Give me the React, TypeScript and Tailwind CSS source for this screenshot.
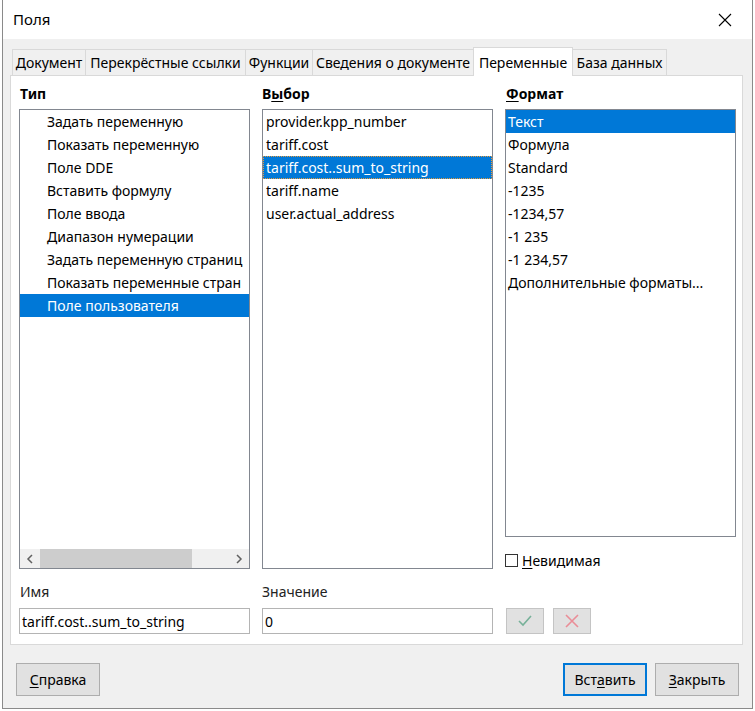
import React from "react";

const typeItems = [
  "Задать переменную",
  "Показать переменную",
  "Поле DDE",
  "Вставить формулу",
  "Поле ввода",
  "Диапазон нумерации",
  "Задать переменную страниц",
  "Показать переменные стран",
  "Поле пользователя",
];
const choiceItems = [
  "provider.kpp_number",
  "tariff.cost",
  "tariff.cost..sum_to_string",
  "tariff.name",
  "user.actual_address",
];
const formatItems = [
  "Текст",
  "Формула",
  "Standard",
  "-1235",
  "-1234,57",
  "-1 235",
  "-1 234,57",
  "Дополнительные форматы...",
];

export default function App() {
  return (
    <div
      className="w-[755px] h-[711px] bg-white relative overflow-hidden text-[14px] text-black"
      style={{ fontFamily: '"Noto Sans", "Open Sans", sans-serif' }}
    >
      <div className="absolute left-[2px] top-0 w-[751px] h-[709px] border border-[#8a8a8a] border-t-0 flex flex-col bg-[#f0f0f0]">
        {/* title bar */}
        <div className="h-[39px] bg-white flex items-center justify-between pl-[10px] pr-[19px] shrink-0">
          <span className="text-[15px]">Поля</span>
          <svg width="16" height="16" viewBox="0 0 16 16">
            <path d="M2 2 L14 14 M14 2 L2 14" stroke="#000" strokeWidth="1.1" />
          </svg>
        </div>
        {/* tabs */}
        <div className="pl-[7px] pt-[7px]">
          <div className="flex items-end pl-[2px] h-[29px] relative z-10">
            <div className="w-[73px] h-[26px] border-t border-l border-[#d9d9d9] flex items-center justify-center">Документ</div>
            <div className="w-[160px] h-[26px] border-t border-l border-[#d9d9d9] flex items-center justify-center">Перекрёстные ссылки</div>
            <div className="w-[67px] h-[26px] border-t border-l border-[#d9d9d9] flex items-center justify-center">Функции</div>
            <div className="w-[161px] h-[26px] border-t border-l border-[#d9d9d9] flex items-center justify-center">Сведения о документе</div>
            <div className="w-[100px] h-[29px] -mb-px bg-white border border-b-0 border-[#d9d9d9] flex items-center justify-center">Переменные</div>
            <div className="w-[94px] h-[26px] border-t border-r border-[#d9d9d9] flex items-center justify-center">База данных</div>
          </div>
          {/* panel */}
          <div className="w-[733px] bg-white border border-[#d9d9d9] h-[570px] pl-[8px] pt-[9px] flex flex-col">
            <div className="flex gap-[12px]">
              <div className="w-[231px] shrink-0 font-bold h-[18px] leading-[18px] pl-px">Тип</div>
              <div className="w-[231px] shrink-0 font-bold h-[18px] leading-[18px]">
                В<span className="underline underline-offset-2">ы</span>бор
              </div>
              <div className="w-[231px] shrink-0 font-bold h-[18px] leading-[18px] pl-px">
                <span className="underline underline-offset-2">Ф</span>ормат
              </div>
            </div>
            <div className="flex gap-[12px] mt-[6px]">
              {/* type list */}
              <div className="w-[231px] shrink-0 h-[460px] border border-[#828790] flex flex-col">
                <div className="flex-1 overflow-hidden">
                  {typeItems.map((t) => (
                    <div
                      key={t}
                      className={
                        "h-[23px] flex items-center pl-[27px] whitespace-nowrap " +
                        (t === "Поле пользователя" ? "bg-[#0078d7] text-white" : "")
                      }
                    >
                      {t}
                    </div>
                  ))}
                </div>
                <div className="h-[19px] bg-[#f0f0f0] flex items-center">
                  <div className="w-[20px] flex justify-center">
                    <svg width="8" height="10" viewBox="0 0 8 10">
                      <path d="M6 1 L2 5 L6 9" stroke="#606060" strokeWidth="1.5" fill="none" />
                    </svg>
                  </div>
                  <div className="w-[152px] h-[19px] bg-[#cdcdcd]" />
                  <div className="flex-1 flex justify-end pr-[6px]">
                    <svg width="8" height="10" viewBox="0 0 8 10">
                      <path d="M2 1 L6 5 L2 9" stroke="#606060" strokeWidth="1.5" fill="none" />
                    </svg>
                  </div>
                </div>
              </div>
              {/* choice list */}
              <div className="w-[231px] shrink-0 h-[460px] border border-[#828790]">
                {choiceItems.map((t) => (
                  <div
                    key={t}
                    className={
                      "h-[23px] flex items-center pl-[3px] whitespace-nowrap " +
                      (t === "tariff.cost..sum_to_string"
                        ? "bg-[#0078d7] text-white outline-1 outline-dotted outline-[#e69a3c] -outline-offset-1"
                        : "")
                    }
                  >
                    {t}
                  </div>
                ))}
              </div>
              {/* format */}
              <div className="w-[231px] shrink-0 flex flex-col">
                <div className="h-[428px] border border-[#828790]">
                  {formatItems.map((t) => (
                    <div
                      key={t}
                      className={
                        "h-[23px] flex items-center pl-[2px] whitespace-nowrap " +
                        (t === "Текст" ? "bg-[#0078d7] text-white" : "")
                      }
                    >
                      {t}
                    </div>
                  ))}
                </div>
                <div className="flex items-center mt-[16px] h-[14px]">
                  <div className="w-[13px] h-[13px] border border-[#333] bg-white" />
                  <span className="ml-[4px]">
                    <span className="underline underline-offset-2">Н</span>евидимая
                  </span>
                </div>
              </div>
            </div>
            <div className="flex gap-[12px] mt-[14px]">
              <div className="w-[231px] shrink-0 h-[18px] leading-[18px] pl-px text-[#222]">Имя</div>
              <div className="w-[231px] shrink-0 h-[18px] leading-[18px] text-[#222]">Значение</div>
            </div>
            <div className="flex gap-[12px] mt-[7px]">
              <div className="w-[231px] shrink-0 h-[26px] border border-[#b4b4b4] flex items-center pl-[2px]">
                tariff.cost..sum_to_string
              </div>
              <div className="w-[231px] shrink-0 h-[26px] border border-[#b4b4b4] flex items-center pl-[2px]">0</div>
              <div className="flex gap-[9px] pl-px">
                <div className="w-[38px] h-[26px] bg-[#e1e1e1] border border-[#c4c4c4] flex items-center justify-center">
                  <svg width="16" height="14" viewBox="0 0 16 14">
                    <path d="M2 7 L6 11 L14 2" stroke="#77b199" strokeWidth="1.6" fill="none" />
                  </svg>
                </div>
                <div className="w-[38px] h-[26px] bg-[#e1e1e1] border border-[#c4c4c4] flex items-center justify-center">
                  <svg width="16" height="16" viewBox="0 0 16 16">
                    <path d="M2 2 L14 14 M14 2 L2 14" stroke="#ea8d97" strokeWidth="1.6" />
                  </svg>
                </div>
              </div>
            </div>
          </div>
        </div>
        {/* footer */}
        <div className="flex items-center justify-between pl-[13px] pr-[13px] mt-[18px]">
          <div className="w-[84px] h-[33px] bg-[#e1e1e1] border border-[#adadad] flex items-center justify-center">
            <span>
              <span className="underline underline-offset-2">С</span>правка
            </span>
          </div>
          <div className="flex gap-[8px]">
            <div className="w-[84px] h-[33px] bg-[#e1e1e1] border-2 border-[#0078d7] flex items-center justify-center">
              <span>
                Вст<span className="underline underline-offset-2">а</span>вить
              </span>
            </div>
            <div className="w-[84px] h-[33px] bg-[#e1e1e1] border border-[#adadad] flex items-center justify-center">
              <span>
                <span className="underline underline-offset-2">З</span>акрыть
              </span>
            </div>
          </div>
        </div>
      </div>
    </div>
  );
}
